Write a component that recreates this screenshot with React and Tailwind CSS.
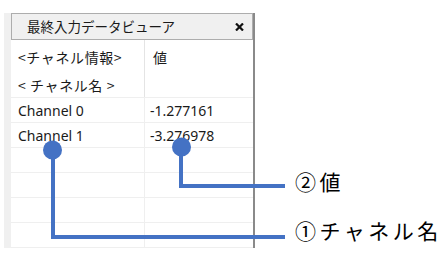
const font = { fontFamily: '"Noto Sans", "Noto Sans CJK JP", sans-serif' };
const jp = { fontFamily: '"Noto Sans CJK JP", sans-serif' };

const rows = [
  { name: "Channel 0", value: "-1.277161" },
  { name: "Channel 1", value: "-3.276978" },
  { name: "", value: "" },
  { name: "", value: "" },
  { name: "", value: "" },
  { name: "", value: "" },
];

function Viewer() {
  return (
    <div className="ml-[4px] mt-[13px] flex w-[251px] h-[235px]">
      <div className="w-[7px] bg-[#f0f0f0]" />
      <div className="flex-1 flex flex-col bg-white">
        <div className="h-[27px] border border-[#adadad] bg-[#f0f0f0] flex items-center justify-between pl-[15px] pr-[8px]">
          <span className="text-[13.5px] text-[#1a1a1a] leading-none" style={jp}>
            最終入力データビューア
          </span>
          <svg width="9" height="8" viewBox="0 0 9 8">
            <path d="M1 0.5 L8 7.5 M8 0.5 L1 7.5" stroke="#111" strokeWidth="2.2" />
          </svg>
        </div>
        <div className="flex h-[58px] border-b border-[#efefef] text-[14px] text-[#1a1a1a]">
          <div className="w-[134px] border-r border-[#e4e4e4] flex flex-col pl-[7px]">
            <div className="h-[30px] flex items-center pt-[5px] tracking-[0.6px]" style={jp}>&lt;チャネル情報&gt;</div>
            <div className="h-[27px] flex items-center pt-[4px] tracking-[0.6px]" style={jp}>&lt; チャネル名 &gt;</div>
          </div>
          <div className="flex-1 pl-[8px]">
            <div className="h-[30px] flex items-center pt-[5px]" style={jp}>値</div>
          </div>
        </div>
        {rows.map((r, i) => (
          <div key={i} className="flex h-[25px] border-b border-[#efefef] text-[14px] text-[#1a1a1a]" style={font}>
            <div className="w-[134px] border-r border-[#efefef] pl-[7px] flex items-center">{r.name}</div>
            <div className="flex-1 pl-[5px] flex items-center">{r.value}</div>
          </div>
        ))}
      </div>
      <div className="w-[2px] bg-[#8a8a8a]" />
    </div>
  );
}

function Callouts() {
  const blue = "#4472c4";
  return (
    <svg className="absolute left-0 top-0" width="448" height="256">
      <path d="M53 150 V237 H285" fill="none" stroke={blue} strokeWidth="4" />
      <path d="M181 147 V186 H285" fill="none" stroke={blue} strokeWidth="4" />
      <circle cx="52.5" cy="150" r="9.5" fill={blue} />
      <circle cx="181.5" cy="147" r="9.5" fill={blue} />
    </svg>
  );
}

export default function App() {
  return (
    <div className="relative w-[448px] h-[256px] bg-white overflow-hidden">
      <Viewer />
      <Callouts />
      <div className="absolute left-[295px] top-[171px] text-[21px] tracking-[3.5px] text-black leading-none" style={jp}>
        ②値
      </div>
      <div className="absolute left-[295px] top-[220px] text-[21px] tracking-[3.5px] text-black leading-none" style={jp}>
        ①チャネル名
      </div>
    </div>
  );
}
